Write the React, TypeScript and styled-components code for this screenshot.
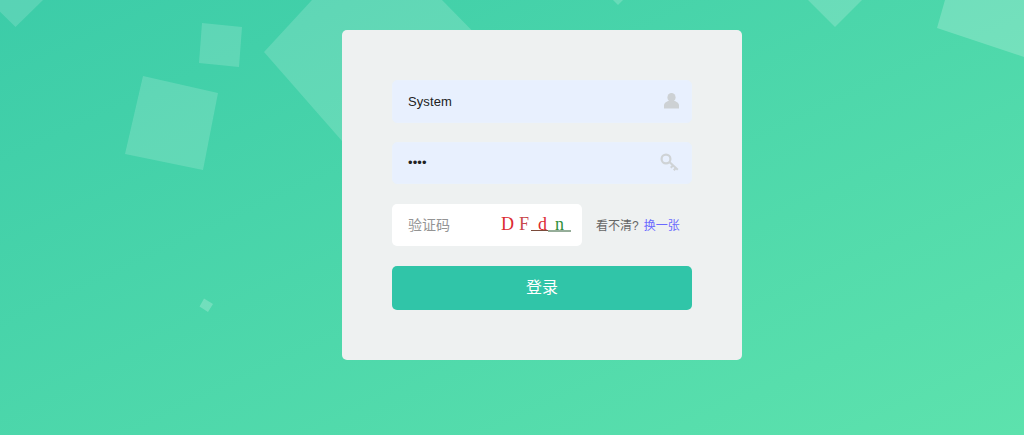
import React from "react";
import styled, { createGlobalStyle } from "styled-components";

const Global = createGlobalStyle`
  html, body { margin: 0; padding: 0; height: 100%; }
  #root { height: 100%; }
  * { box-sizing: border-box; }
`;

const Page = styled.div`
  position: relative;
  height: 435px;
  overflow: hidden;
  background: linear-gradient(155deg, #3ccca8 0%, #5de2ad 100%);
  font-family: "Liberation Sans", "Noto Sans CJK SC", sans-serif;
  display: flex;
  justify-content: center;
  padding: 30px 0 0 60px;
`;

const Decor = styled.svg`
  position: absolute;
  inset: 0;
  width: 1024px;
  height: 435px;
`;

const Card = styled.form`
  position: relative;
  width: 400px;
  height: 330px;
  padding: 50px;
  background: #eef1f1;
  border-radius: 5px;
  display: flex;
  flex-direction: column;
`;

const Field = styled.div`
  height: 43px;
  margin-bottom: 19px;
  padding: 0 12px 0 15px;
  display: flex;
  align-items: center;
  justify-content: space-between;
  background: #e8f0fe;
  border: 1px solid #e9f1fd;
  border-radius: 5px;
`;

const Value = styled.span`
  font-size: 13px;
  letter-spacing: 0.1px;
  color: #222;
`;

const CaptchaRow = styled.div`
  display: flex;
  align-items: center;
  margin-top: 1px;
  margin-bottom: 20px;
`;

const CaptchaBox = styled.div`
  width: 190px;
  height: 42px;
  padding: 0 7px 0 16px;
  display: flex;
  align-items: center;
  justify-content: space-between;
  background: #fff;
  border-radius: 5px;
`;

const Placeholder = styled.span`
  margin-bottom: 2px;
  font-size: 14px;
  color: #949494;
`;

const Hint = styled.span`
  margin: 0 0 1px 14px;
  font-size: 12px;
  color: #666;
`;

const Link = styled.a`
  margin: 0 0 1px 5px;
  font-size: 12px;
  color: #6a6aff;
`;

const Submit = styled.button`
  height: 44px;
  padding: 0 0 5px;
  border: none;
  border-radius: 5px;
  background: #30c5a8;
  color: #fff;
  font-family: inherit;
  font-size: 16px;
`;

const UserIcon = () => (
  <svg width="15" height="16" viewBox="0 0 15 16" fill="#cdd1d4">
    <ellipse cx="7.5" cy="4.4" rx="4.1" ry="4.4" />
    <path d="M0 15.5V12c0-2 2.5-3.2 4-4h7c1.5.8 4 2 4 4v3.5z" />
  </svg>
);

const KeyIcon = () => (
  <svg width="19" height="19" viewBox="0 0 19 19" fill="none" stroke="#cfd3d6">
    <circle cx="6" cy="6" r="4.4" strokeWidth="2.2" />
    <path d="M9.4 9l8.4 7.8M13 12.4l-2.2 2.4M15.8 15l-2 2.2" strokeWidth="2.1" />
  </svg>
);

const Captcha = () => (
  <svg width="74" height="22" viewBox="0 0 74 22">
    <g fontFamily="'Liberation Serif', serif" fontSize="18">
      <text x="0" y="16" fill="#dc2a30">D</text>
      <text x="18" y="16" fill="#c8494b">F</text>
      <text x="37" y="16" fill="#dc2a30">d</text>
      <text x="54" y="16" fill="#2f8f3a">n</text>
    </g>
    <path d="M30 16.5h17" stroke="#7a4a3a" />
    <path d="M47 17h23" stroke="#2c5c34" />
  </svg>
);

const shapes: { points: string; alpha: number }[] = [
  { points: "-12,0 43,0 15.5,27", alpha: 0.15 },
  { points: "202,23 242,27 239,67 199,63", alpha: 0.16 },
  { points: "143,76 218,93 203,170 125,154", alpha: 0.16 },
  { points: "264,52 312,0 442,0 560,120 420,230", alpha: 0.16 },
  { points: "613,0 623,0 618,5", alpha: 0.18 },
  { points: "808,0 862,0 835,27", alpha: 0.18 },
  { points: "945,0 1024,0 1024,57 937,28", alpha: 0.21 },
  { points: "204,298.5 213,304 208,312 199.5,306.5", alpha: 0.22 },
];

export default function App() {
  return (
    <Page>
      <Global />
      <Decor viewBox="0 0 1024 435" fill="#fff">
        {shapes.map((s) => (
          <polygon key={s.points} points={s.points} fillOpacity={s.alpha} />
        ))}
      </Decor>
      <Card>
        <Field>
          <Value>System</Value>
          <UserIcon />
        </Field>
        <Field>
          <Value>••••</Value>
          <KeyIcon />
        </Field>
        <CaptchaRow>
          <CaptchaBox>
            <Placeholder>验证码</Placeholder>
            <Captcha />
          </CaptchaBox>
          <Hint>看不清?</Hint>
          <Link>换一张</Link>
        </CaptchaRow>
        <Submit type="button">登录</Submit>
      </Card>
    </Page>
  );
}
